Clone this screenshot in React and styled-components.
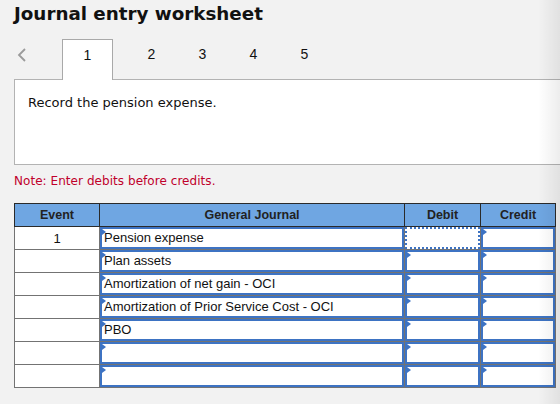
import * as React from "react"
import styled, { createGlobalStyle } from "styled-components"

const GlobalStyle = createGlobalStyle`
  html, body {
    margin: 0;
    padding: 0;
    background: #f2f2f2;
  }
  body {
    font-family: "DejaVu Sans", Verdana, sans-serif;
    overflow: hidden;
  }
`

const Page = styled.div`
  position: relative;
  width: 560px;
  height: 404px;
  padding-left: 14px;
  box-sizing: border-box;
  overflow: hidden;
`

const EdgeFade = styled.div`
  position: absolute;
  top: 0;
  right: 0;
  width: 22px;
  height: 100%;
  background: linear-gradient(to right, rgba(0, 0, 0, 0), rgba(0, 0, 0, 0.07));
  pointer-events: none;
`

const Title = styled.h1`
  margin: 0;
  padding-top: 3px;
  font-size: 18.3px;
  line-height: 22px;
  font-weight: bold;
  color: #111;
`

const TabBar = styled.div`
  display: flex;
  align-items: flex-start;
  margin-top: 14px;
  height: 40px;
`

const BackArrow = styled.button`
  width: 48px;
  height: 40px;
  padding: 9px 0 0 3px;
  border: none;
  background: transparent;
  display: flex;
  align-items: flex-start;
  box-sizing: border-box;
`

const Tab = styled.div`
  box-sizing: border-box;
  width: 51px;
  height: ${({ active }) => (active ? "41px" : "40px")};
  margin-right: ${({ active }) => (active ? "13px" : "0")};
  padding-top: 7px;
  text-align: center;
  font-family: "Liberation Sans", Arial, sans-serif;
  font-size: 14px;
  line-height: 16px;
  color: #111;
  background: ${({ active }) => (active ? "#fff" : "transparent")};
  border: ${({ active }) => (active ? "1px solid #a9a9a9" : "none")};
  border-bottom: none;
  position: relative;
  z-index: 1;
`

const Panel = styled.div`
  box-sizing: border-box;
  height: 86px;
  margin-right: -20px;
  padding: 15px 0 0 13px;
  background: #fff;
  border: 1px solid #b3b3b3;
  font-size: 13px;
  line-height: 16px;
  color: #111;
`

const Note = styled.p`
  margin: 8px 0 0;
  font-size: 12px;
  line-height: 16px;
  letter-spacing: 0.05px;
  color: #c0002b;
`

const Table = styled.table`
  margin-top: 14px;
  border-collapse: collapse;
  table-layout: fixed;
  width: 541px;
  font-family: "Liberation Sans", Arial, sans-serif;
  font-size: 13px;
  color: #111;
`

const Head = styled.th`
  height: 22px;
  padding: 0;
  background: #6fa6e2;
  border: 1px solid #2a2a2a;
  font-weight: bold;
  font-size: 12.5px;
  color: #222;
  text-align: center;
`

const Cell = styled.td`
  padding: 0;
  border: 1px solid #737373;
  background: #fff;
  text-align: ${({ center }) => (center ? "center" : "left")};
  height: 22px;
`

const Input = styled.div`
  position: relative;
  box-sizing: border-box;
  height: 22px;
  padding: 1px 0 0 2px;
  border: 2px ${({ focused }) => (focused ? "dotted" : "solid")} #3d73c3;
  background: #fff;
  line-height: 16px;
  white-space: nowrap;
  overflow: hidden;
`

const Marker = styled.span`
  position: absolute;
  top: 0;
  left: 0;
  width: 0;
  height: 0;
  border-top: 3px solid transparent;
  border-bottom: 3px solid transparent;
  border-left: 4px solid #3d73c3;
`

const rows = [
  { event: "1", account: "Pension expense" },
  { event: "", account: "Plan assets" },
  { event: "", account: "Amortization of net gain - OCI" },
  { event: "", account: "Amortization of Prior Service Cost - OCI" },
  { event: "", account: "PBO" },
  { event: "", account: "" },
  { event: "", account: "" },
]

const EntryInput = ({ children, focused }) => (
  <Input focused={focused}>
    {!focused && <Marker />}
    {children}
  </Input>
)

const App = () => (
  <Page>
    <GlobalStyle />
    <Title>Journal entry worksheet</Title>
    <TabBar>
      <BackArrow aria-label="Previous">
        <svg width="10" height="14" viewBox="0 0 10 14">
          <polyline points="8,1 2,7 8,13" fill="none" stroke="#9b9b9b" strokeWidth="1.8" />
        </svg>
      </BackArrow>
      <Tab active>1</Tab>
      <Tab>2</Tab>
      <Tab>3</Tab>
      <Tab>4</Tab>
      <Tab>5</Tab>
    </TabBar>
    <Panel>Record the pension expense.</Panel>
    <Note>Note: Enter debits before credits.</Note>
    <Table>
      <colgroup>
        <col style={{ width: 85 }} />
        <col style={{ width: 305 }} />
        <col style={{ width: 76 }} />
        <col style={{ width: 75 }} />
      </colgroup>
      <thead>
        <tr>
          <Head>Event</Head>
          <Head>General Journal</Head>
          <Head>Debit</Head>
          <Head>Credit</Head>
        </tr>
      </thead>
      <tbody>
        {rows.map((row, i) => (
          <tr key={i}>
            <Cell center>{row.event}</Cell>
            <Cell>
              <EntryInput>{row.account}</EntryInput>
            </Cell>
            <Cell>
              <EntryInput focused={i === 0} />
            </Cell>
            <Cell>
              <EntryInput />
            </Cell>
          </tr>
        ))}
      </tbody>
    </Table>
    <EdgeFade />
  </Page>
)

export default App
